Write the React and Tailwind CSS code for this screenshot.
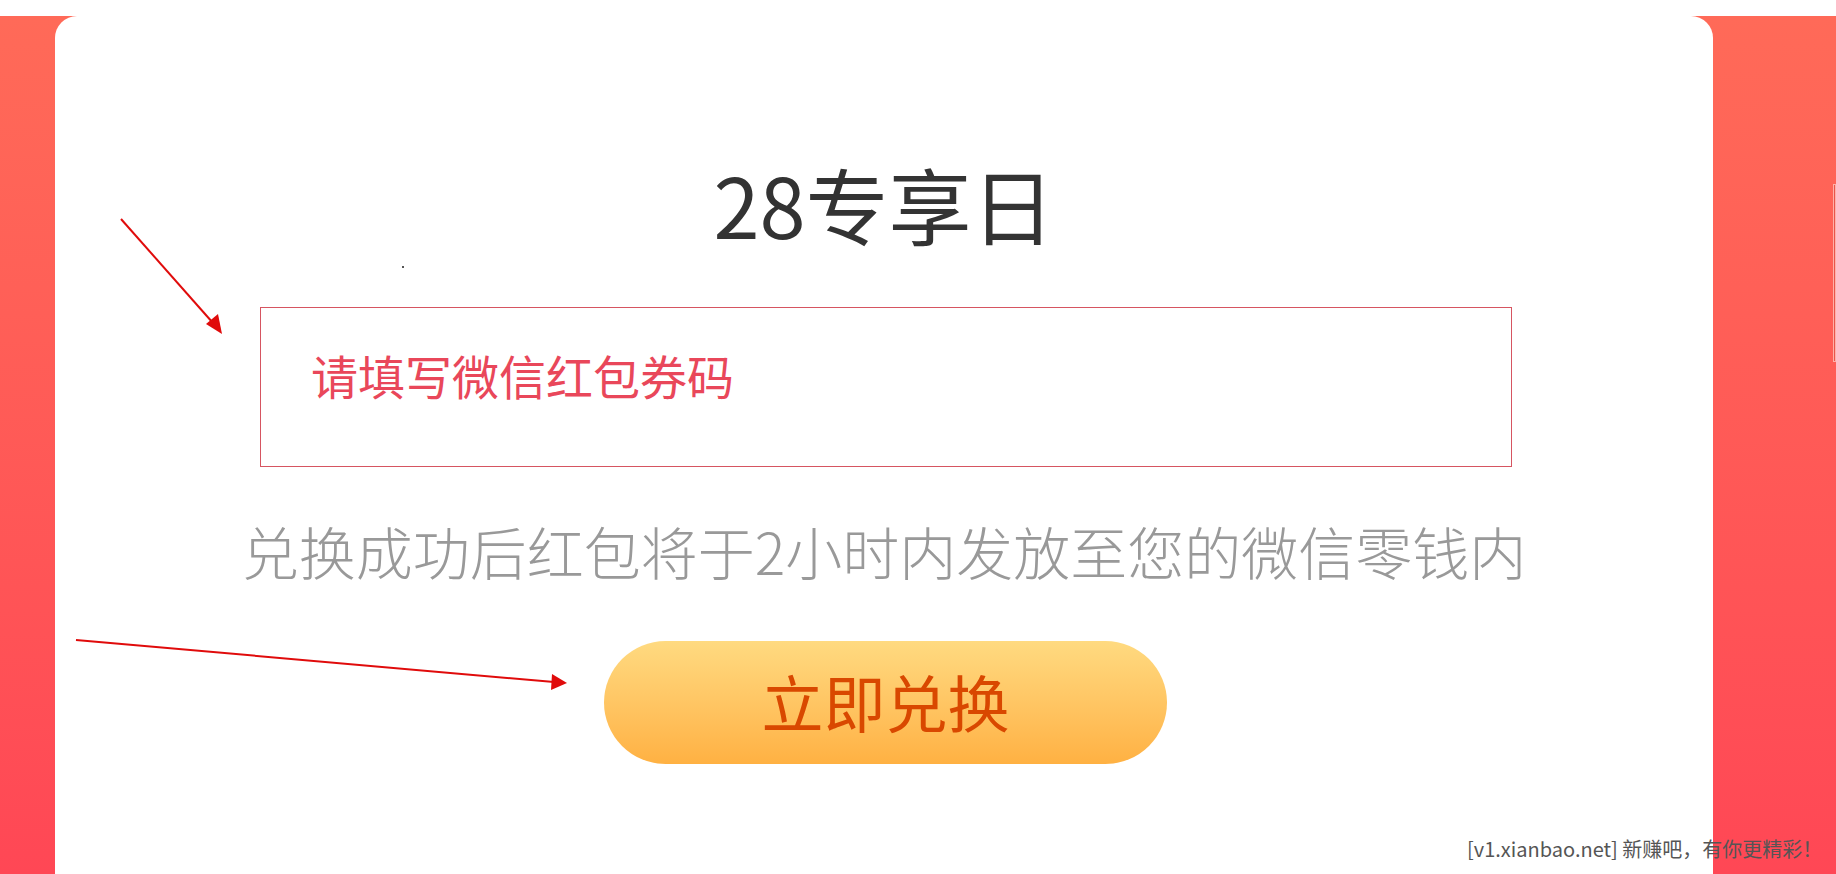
import React from 'react';

const cjk = { fontFamily: '"Noto Sans CJK SC", "Noto Sans", sans-serif' };

const Arrows = () => (
    <svg className="absolute inset-0 pointer-events-none" width="1836" height="874">
        <line x1="121" y1="219" x2="213" y2="323" stroke="#e00b0b" strokeWidth="2" />
        <polygon points="222,334 206,324 218,314" fill="#e00b0b" />
        <line x1="76" y1="640" x2="554" y2="682" stroke="#e00b0b" strokeWidth="2" />
        <polygon points="567,683 552,674 551,690" fill="#e00b0b" />
    </svg>
);

const App = () => {
    return (
        <div className="relative w-[1836px] h-[874px] overflow-hidden bg-white" style={cjk}>
            <div className="mt-[16px] h-[858px] bg-gradient-to-b from-[#ff6a58] to-[#ff4755] flex">
                <div className="ml-[55px] w-[1658px] h-full bg-white rounded-t-[22px] flex flex-col items-center">
                    <h1 className="mt-[146px] text-[83px] leading-none text-[#333] font-normal">28专享日</h1>
                    <div className="mt-[62px] ml-[4px] w-[1252px] h-[160px] border border-[#d65561] pl-[50px] pt-[43px]">
                        <span className="text-[47px] leading-none text-[#e9475a]">请填写微信红包券码</span>
                    </div>
                    <p className="mt-[55px] text-[57px] leading-none text-[#999] font-light">
                        兑换成功后红包将于2小时内发放至您的微信零钱内
                    </p>
                    <button className="mt-[62px] ml-[3px] w-[563px] h-[123px] rounded-full bg-gradient-to-b from-[#ffda80] to-[#ffb142] text-[62px] leading-none text-[#d94800] pb-[4px]">
                        立即兑换
                    </button>
                </div>
            </div>
            <div className="absolute left-[402px] top-[266px] w-[2px] h-[2px] bg-[#555]" />
            <div className="absolute right-0 top-[184px] w-[3px] h-[178px] border border-[#ffb0a8] bg-[#e8544c]" />
            <Arrows />
            <div className="absolute left-[1467px] top-[835px] text-[20px] leading-[28px] text-[#555] whitespace-nowrap">
                [v1.xianbao.net] 新赚吧，有你更精彩！
            </div>
        </div>
    );
};

export default App;
